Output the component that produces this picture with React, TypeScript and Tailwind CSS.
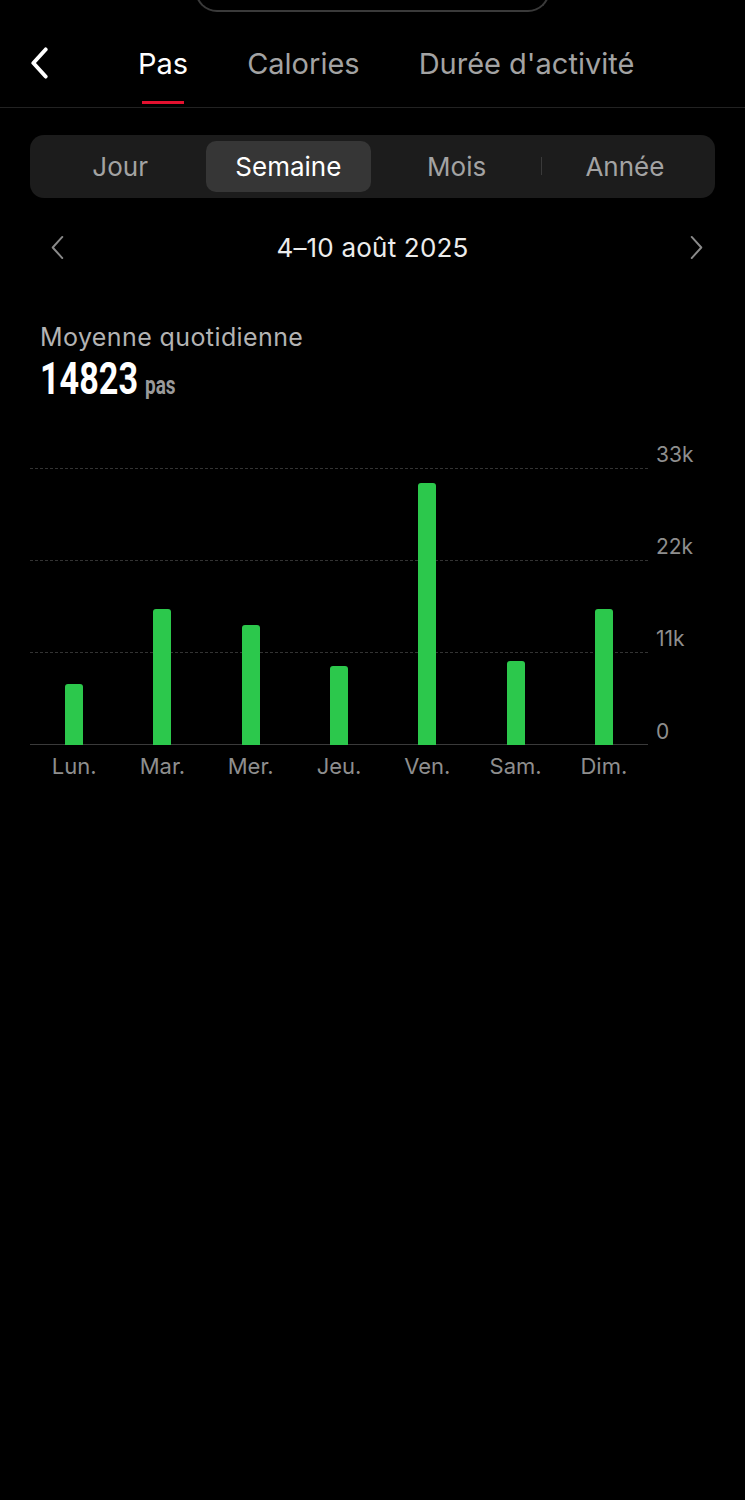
import React from 'react';

const days = [
  { label: 'Lun.', value: 7150 },
  { label: 'Mar.', value: 16100 },
  { label: 'Mer.', value: 14200 },
  { label: 'Jeu.', value: 9400 },
  { label: 'Ven.', value: 31200 },
  { label: 'Sam.', value: 9900 },
  { label: 'Dim.', value: 16100 },
];

const MAX = 33000;
const PLOT_H = 277;

const Chevron = ({ dir, className }: { dir: 'left' | 'right'; className?: string }) => (
  <svg viewBox="0 0 16 26" className={className} fill="none" stroke="currentColor" strokeLinecap="round" strokeLinejoin="round">
    {dir === 'left' ? <path d="M13 2 L3 13 L13 24" /> : <path d="M3 2 L13 13 L3 24" />}
  </svg>
);

export default function App() {
  const tabs = ['Pas', 'Calories', "Durée d'activité"];
  const periods = ['Jour', 'Semaine', 'Mois', 'Année'];

  return (
    <div className="min-h-[1500px] w-[745px] bg-black text-white" style={{ fontFamily: 'Inter, Roboto, sans-serif' }}>
      {/* top notch outline */}
      <div className="h-[12px] overflow-hidden">
        <div className="mx-auto -mt-[30px] h-[42px] w-[355px] rounded-b-[22px] border-2 border-t-0 border-[#3a3a3a]" />
      </div>

      {/* header */}
      <div className="flex h-[96px] items-start border-b border-[#222] pl-[29px]">
        <Chevron dir="left" className="mt-[35px] h-[32px] w-[21px] text-white [stroke-width:3.2]" />
        <div className="ml-[88px] flex gap-[59px]">
          {tabs.map((t, i) => (
            <div key={t} className="flex flex-col items-center pt-[34px]">
              <span className={`text-[29px] leading-[35px] ${i === 0 ? 'text-white' : 'text-[#a3a3a3]'}`}>{t}</span>
              <div className={`mt-[20px] h-[3px] w-[42px] ${i === 0 ? 'bg-[#e3112f]' : 'bg-transparent'}`} />
            </div>
          ))}
        </div>
      </div>

      {/* period selector */}
      <div className="mx-[30px] mt-[27px] grid h-[63px] grid-cols-4 rounded-[14px] bg-[#1c1c1c] p-[6px]">
        {periods.map((p, i) => (
          <div key={p} className="relative flex items-center justify-center">
            {i === 1 && <div className="absolute inset-y-0 left-[2px] right-[2px] rounded-[10px] bg-[#363636]" />}
            {i === 3 && <div className="absolute left-0 top-[16px] h-[18px] w-px bg-[#3a3a3a]" />}
            <span className={`relative text-[26px] ${i === 1 ? 'text-white' : 'text-[#a3a3a3]'}`}>{p}</span>
          </div>
        ))}
      </div>

      {/* date navigation */}
      <div className="mt-[26px] grid h-[46px] grid-cols-[1fr_auto_1fr] items-center pl-[49px] pr-[40px]">
        <Chevron dir="left" className="h-[25px] w-[17px] text-[#8a8a8a] [stroke-width:2]" />
        <span className="-ml-[9px] text-[26px] tracking-[0.2px] text-[#ececec]">4–10 août 2025</span>
        <Chevron dir="right" className="h-[25px] w-[17px] justify-self-end text-[#8a8a8a] [stroke-width:2]" />
      </div>

      {/* daily average */}
      <div className="mt-[53px] pl-[40px]">
        <div className="text-[25px] leading-[28px] tracking-[0.4px] text-[#b3b3b3]">Moyenne quotidienne</div>
        <div
          className="mt-[6px] flex origin-left scale-x-[0.76] items-baseline gap-[9px]"
          style={{ fontFamily: 'Roboto, sans-serif' }}
        >
          <span className="text-[45px] font-bold leading-[44px] text-white">14823</span>
          <span className="text-[25px] font-bold text-[#9a9a9a]">pas</span>
        </div>
      </div>

      {/* chart */}
      <div className="mt-[63px] px-[30px]">
        <div className="relative h-[277px] w-[618px]">
          {[0, 1, 2].map((k) => (
            <div key={k} className="absolute left-0 right-0 border-t border-dashed border-[#333]" style={{ top: (k * PLOT_H) / 3 }} />
          ))}
          <div className="absolute bottom-0 left-0 right-0 border-t border-[#3a3a3a]" />
          {['33k', '22k', '11k', '0'].map((l, k) => (
            <span key={l} className="absolute left-[626px] text-[21px] leading-[24px] text-[#8e8e8e]" style={{ top: (k * PLOT_H) / 3 - 25 }}>
              {l}
            </span>
          ))}
          <div className="relative grid h-full grid-cols-7 items-end">
            {days.map((d) => (
              <div key={d.label} className="flex justify-center">
                <div className="w-[18px] rounded-t-[3px] bg-[#2cc84c]" style={{ height: (d.value / MAX) * PLOT_H }} />
              </div>
            ))}
          </div>
        </div>
        <div className="mt-[9px] grid w-[618px] grid-cols-7">
          {days.map((d) => (
            <span key={d.label} className="text-center text-[22px] leading-[24px] text-[#8e8e8e]">{d.label}</span>
          ))}
        </div>
      </div>
    </div>
  );
}
